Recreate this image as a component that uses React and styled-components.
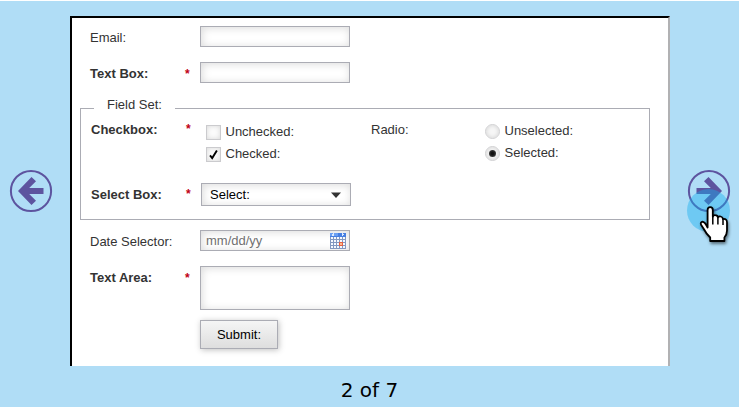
import React from "react";
import styled, { createGlobalStyle } from "styled-components";

const Global = createGlobalStyle`
  * { box-sizing: border-box; }
  body {
    margin: 0;
    background: #fff;
    font: 13px/16px "Liberation Sans", Arial, Helvetica, sans-serif;
    color: #333;
  }
`;

const Page = styled.main`
  width: 739px;
  height: 406px;
  margin-top: 1px;
  background: #b0ddf6;
  display: grid;
  grid-template-columns: 70px 600px 69px;
  grid-template-rows: 350px 1fr;
  padding-top: 15px;
`;

const Side = styled.div`
  position: relative;
  padding: 152px 0 0 ${(p) => p.$inset}px;
`;

const NavButton = styled.button`
  display: block;
  width: 46px;
  height: 46px;
  padding: 0;
  border: 0;
  background: none;
`;

const Halo = styled.span`
  position: absolute;
  left: 17px;
  top: 173px;
  width: 43px;
  height: 43px;
  border-radius: 50%;
  background: rgba(18, 174, 239, 0.42);
`;

const HandPointer = styled.svg`
  position: absolute;
  left: 26px;
  top: 188px;
  filter: drop-shadow(1px 2px 1.5px rgba(0, 0, 0, 0.5));
`;

const Panel = styled.form`
  background: #fff;
  border: 2px solid #000;
  border-right-color: #b1b1b3;
  border-bottom: 0;
  padding: 8px 18px 0 8px;
`;

const Row = styled.div`
  display: flex;
  align-items: flex-start;
  padding-left: 10px;
  margin-bottom: ${(p) => p.$after ?? 15}px;
`;

const Label = styled.div`
  width: ${(p) => p.$width ?? 95}px;
  padding-top: 4px;
  font-weight: ${(p) => (p.$required ? 700 : 400)};
  white-space: nowrap;
`;

const Star = styled.div`
  width: 15px;
  padding-top: ${(p) => p.$top ?? 4}px;
  font-size: 12px;
  font-weight: 700;
  color: #c00018;
`;

const Field = styled.div`
  display: flex;
  align-items: center;
  justify-content: space-between;
  width: 150px;
  height: ${(p) => p.$height ?? 21}px;
  border: 1px solid #abacb4;
  background: #fff;
  box-shadow: inset 1px 1px 8px rgba(0, 0, 0, 0.15);
  padding: 0 3px 0 5px;
  color: #707070;
`;

const SelectField = styled(Field)`
  padding: 0 9px 0 8px;
  color: #000;
`;

const Group = styled.section`
  width: 570px;
  height: 112px;
  margin: 25px 0 10px;
  border: 1px solid #abacb4;
`;

const Legend = styled.div`
  width: 81px;
  height: 16px;
  margin: -12px 0 0 13px;
  padding-left: 13px;
  background: #fff;
`;

const GroupRow = styled.div`
  display: flex;
  align-items: flex-start;
  margin-top: ${(p) => p.$before}px;
  padding-left: 10px;
`;

const Options = styled.div`
  width: ${(p) => p.$width}px;
  padding: ${(p) => p.$top}px 0 0 5px;
  display: grid;
  grid-auto-rows: 22px;
`;

const Option = styled.div`
  display: flex;
  gap: 4.5px;
  line-height: 16px;
`;

const CheckMark = styled.span`
  width: 15px;
  height: 15px;
  margin-top: 1px;
  border: 1px solid #cbcbce;
  background: #fbfbfb;
  box-shadow: inset 0 0 5px rgba(0, 0, 0, 0.14);
  svg { display: block; }
`;

const RadioMark = styled.span`
  display: grid;
  place-items: center;
  width: 15px;
  height: 15px;
  margin-top: 1px;
  border: 1px solid #d0d0d2;
  border-radius: 50%;
  background: #f6f6f6;
  box-shadow: inset 0 0 4px rgba(0, 0, 0, 0.14);
`;

const Dot = styled.i`
  width: 7px;
  height: 7px;
  border-radius: 50%;
  background: radial-gradient(#111 25%, #444 80%);
`;

const Submit = styled.button`
  display: block;
  width: 78px;
  height: 29px;
  margin-left: 120px;
  padding: 0;
  border: 1px solid #abacb4;
  background: linear-gradient(#f5f5f5, #dedede);
  box-shadow: 1px 1px 6px rgba(0, 0, 0, 0.25);
  font: inherit;
  color: #000;
`;

const Counter = styled.footer`
  grid-column: 2;
  padding: 12px 1px 0 0;
  text-align: center;
  font: 20px/24px "DejaVu Sans", Verdana, sans-serif;
  color: #000;
`;

const Arrow = ({ flip }) => (
  <svg width="46" height="46" viewBox="-23 -23 46 46">
    <g transform={flip ? "scale(-1 1)" : undefined}>
      <circle r="20.1" fill="none" stroke="#5d549f" strokeWidth="2" />
      <path
        d="M-13 0L0.5-14L5-9.8L-1.8-3H12.5V3H-1.8L5 9.8L0.5 14Z"
        fill="#5d549f"
      />
    </g>
  </svg>
);

const Calendar = () => (
  <svg width="16" height="16" viewBox="0 0 16 16" shapeRendering="crispEdges">
    <path fill="#8298c0" d="M0 0h16v16H0z" />
    <path fill="#477fe2" d="M0 0h16v4H0z" />
    <path fill="#6ba0f3" d="M0 0h8v3H0z" />
    <path fill="#dceaff" d="M2 1h1v2H2zM3 0h1v3H3zM12 0h1v3h-1zM13 1h1v1h-1z" />
    {[4, 7, 10, 13].map((y) =>
      [1, 4, 7, 10, 13].map((x) => (
        <rect key={`${x}-${y}`} x={x} y={y} width="2" height="2" fill="#f6f9ff" />
      ))
    )}
    <path fill="#e46243" d="M9 9h4v4H9z" />
    <path fill="#ffb98e" d="M10 10h2v2h-2z" />
  </svg>
);

export default function App() {
  return (
    <>
      <Global />
      <Page>
        <Side $inset={8}>
          <NavButton type="button" aria-label="Previous"><Arrow /></NavButton>
        </Side>
        <Panel>
          <Row>
            <Label $width={110}>Email:</Label>
            <Field />
          </Row>
          <Row>
            <Label $required>Text Box:</Label>
            <Star>*</Star>
            <Field />
          </Row>
          <Group>
            <Legend>Field Set:</Legend>
            <GroupRow $before={5}>
              <Label $required>Checkbox:</Label>
              <Star $top={3}>*</Star>
              <Options $width={170} $top={6}>
                <Option><CheckMark />Unchecked:</Option>
                <Option>
                  <CheckMark>
                    <svg width="13" height="13" viewBox="0 0 13 13">
                      <path d="M3 7.3L5.2 10L9.9 2.4" fill="none" stroke="#000" strokeWidth="1.9" />
                    </svg>
                  </CheckMark>
                  Checked:
                </Option>
              </Options>
              <Label $width={109}>Radio:</Label>
              <Options $width={150} $top={5}>
                <Option><RadioMark />Unselected:</Option>
                <Option><RadioMark><Dot /></RadioMark>Selected:</Option>
              </Options>
            </GroupRow>
            <GroupRow $before={15}>
              <Label $required>Select Box:</Label>
              <Star $top={3}>*</Star>
              <SelectField $height={23}>
                Select:
                <svg width="10" height="6"><path d="M0 .5H10L5 6Z" fill="#333" /></svg>
              </SelectField>
            </GroupRow>
          </Group>
          <Row>
            <Label $width={110}>Date Selector:</Label>
            <Field>mm/dd/yy<Calendar /></Field>
          </Row>
          <Row $after={10}>
            <Label $required>Text Area:</Label>
            <Star>*</Star>
            <Field $height={44} />
          </Row>
          <Submit type="button">Submit:</Submit>
        </Panel>
        <Side $inset={16}>
          <NavButton type="button" aria-label="Next"><Arrow flip /></NavButton>
          <Halo />
          <HandPointer width="36" height="42" viewBox="0 0 36 42">
            <path
              d="M11.6 23.5V6Q11.6 3.2 14.2 3.2Q16.8 3.2 16.8 6V12.5Q17.5 11 19.3 11.2Q21.6 11.4 21.9 13.3Q23 12 24.7 12.5Q26.7 13 27 15Q31 14.5 31 18.5V26.5Q31 30.5 28.4 33.5V37H14.2V33.5Q10 29.5 7.8 25L5.2 21Q4 18.6 6 17.8Q8.6 17.2 11.6 23.5Z"
              fill="#fff" stroke="#000" strokeWidth="1.8" strokeLinejoin="round"
            />
            <path d="M16.8 12V20.5M21.9 13.5V20.5M27 15V21" fill="none" stroke="#000" strokeWidth="1.5" />
          </HandPointer>
        </Side>
        <Counter>2 of 7</Counter>
      </Page>
    </>
  );
}
